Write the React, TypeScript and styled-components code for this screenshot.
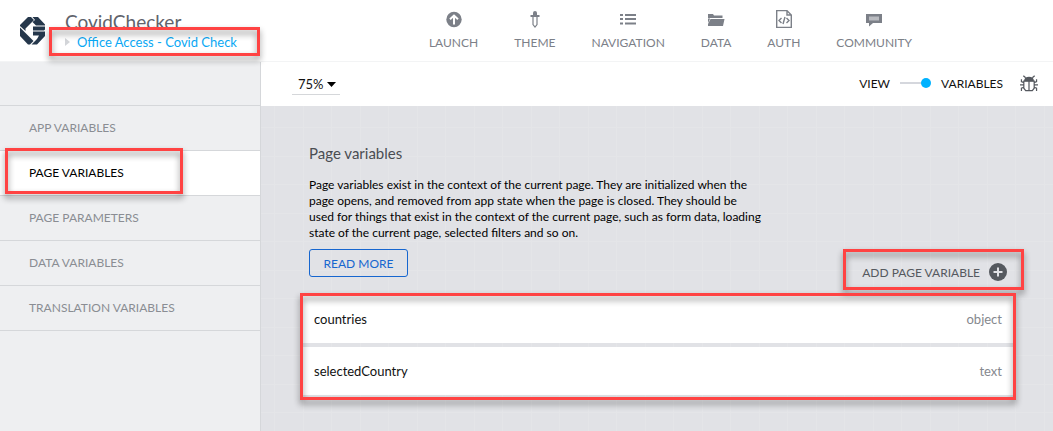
import React from "react";
import styled, { createGlobalStyle, css } from "styled-components";

const Global = createGlobalStyle`
  * { box-sizing: border-box; }
  body { margin: 0; background: #fff; font-family: Lato, "Liberation Sans", sans-serif; font-size: 12px; color: #111; }
  button, select, input { font: inherit; color: inherit; margin: 0; }
  a { color: inherit; text-decoration: none; }
  ul { margin: 0; padding: 0; list-style: none; }
  svg { display: block; }
`;

const Page = styled.div`
  min-height: 100vh;
  display: flex;
  flex-direction: column;
`;

const Header = styled.header`
  display: flex;
  height: 62px;
  border-bottom: 1px solid #f3f4f5;
  background: #fff;
`;

const Brand = styled.div`
  width: 288px;
  flex: none;
  display: flex;
  gap: 19px;
  padding: 12px 0 0 20px;
`;

const LogoLink = styled.a`
  padding-top: 5px;
`;

const AppTitle = styled.h1`
  margin: 0;
  font-size: 19px;
  line-height: 20px;
  font-weight: 400;
  color: #5f636c;
`;

const Crumb = styled.a`
  position: relative;
  display: flex;
  align-items: center;
  gap: 7px;
  line-height: 20px;
  font-size: 13px;
  color: #09a8f4;
`;

const CrumbBlock = styled.div`
  display: flex;
  flex-direction: column;
  align-items: flex-start;
`;

const TopNav = styled.nav`
  flex: 1;
  display: flex;
  justify-content: center;
  gap: 36px;
`;

const TopLink = styled.a`
  display: flex;
  flex-direction: column;
  align-items: center;
  gap: 6px;
  padding-top: 9px;
  line-height: 16px;
  color: #7c8088;

  svg { height: 20px; }
`;

const Body = styled.div`
  flex: 1;
  display: flex;
`;

const Sidebar = styled.nav`
  width: 261px;
  flex: none;
  padding-top: 43px;
  background: #eeeff1;
  border-right: 1px solid #d5d7da;
`;

const SideItem = styled.li`
  border-top: 1px solid #d5d7da;
`;

const SideLink = styled.a<{ $active?: boolean }>`
  position: relative;
  display: block;
  height: 44px;
  padding-left: 29px;
  line-height: 43px;
  color: #8a8d93;
  ${(p) => p.$active && css`background: #fff; color: #000;`}
`;

const Main = styled.main`
  flex: 1;
  min-width: 0;
  display: flex;
  flex-direction: column;
`;

const Toolbar = styled.div`
  height: 44px;
  display: flex;
  align-items: center;
  justify-content: space-between;
  padding: 0 15px 0 31px;
  background: #fff;
`;

const ZoomBox = styled.div`
  position: relative;
  width: 48px;

  svg { position: absolute; right: 4px; top: 9px; pointer-events: none; }
`;

const ZoomSelect = styled.select`
  appearance: none;
  display: block;
  width: 100%;
  height: 22px;
  padding: 0 0 0 6px;
  border: 0;
  border-bottom: 1px solid #d5d7da;
  border-radius: 0;
  background: transparent;
  font-size: 13px;
`;

const ModeSwitch = styled.div`
  display: flex;
  align-items: center;
  margin-top: -2px;

  label { display: flex; align-items: center; gap: 10px; }
`;

const Switch = styled.input`
  appearance: none;
  position: relative;
  width: 31px;
  height: 10px;

  &::before { content: ""; position: absolute; left: 0; right: 5px; top: 4px; height: 2px; background: #d5d7dd; }
  &::after { content: ""; position: absolute; right: 0; top: 0; width: 10px; height: 10px; border-radius: 50%; background: #00b2ff; }
`;

const IconButton = styled.button`
  margin-left: 17px;
  padding: 0;
  border: 0;
  background: none;
`;

const Canvas = styled.section`
  flex: 1;
  padding: 38px 40px 31px 42px;
  background-color: #e1e2e6;
  background-image:
    linear-gradient(90deg, #e4e5e8 1px, transparent 1px),
    linear-gradient(90deg, #e4e5e8 1px, transparent 1px),
    linear-gradient(#e4e5e8 1px, transparent 1px),
    linear-gradient(#e4e5e8 1px, transparent 1px);
  background-size: 57px 57px;
  background-position: 13px 0, 42px 0, 0 21px, 0 50px;
`;

const Intro = styled.div`
  max-width: 458px;
  padding-left: 6px;

  h2 { margin: 0; font-size: 15px; line-height: 18px; font-weight: 400; color: #4a4d52; }
  p { margin: 15px 0 8px; line-height: 16px; color: #000; }
`;

const ReadMore = styled.button`
  display: block;
  width: 99px;
  height: 28px;
  padding: 0;
  border: 1px solid #1666cf;
  border-radius: 3px;
  background: transparent;
  color: #1666cf;
`;

const Actions = styled.div`
  display: flex;
  justify-content: flex-end;
  margin-top: -17px;
  padding-right: 6px;
`;

const AddButton = styled.button`
  position: relative;
  display: flex;
  align-items: center;
  gap: 9px;
  height: 24px;
  padding: 0;
  border: 0;
  background: none;
  color: #55595f;
`;

const VariableList = styled.ul`
  position: relative;
  display: flex;
  flex-direction: column;
  gap: 4px;
  margin-top: 11px;
`;

const VariableRow = styled.li`
  display: flex;
  align-items: center;
  justify-content: space-between;
  height: 48px;
  padding: 0 11px;
  background: #fff;
  font-size: 13px;

  span:last-child { color: #85888e; }
`;

const Highlight = styled.span<{ $inset: string }>`
  position: absolute;
  inset: ${(p) => p.$inset};
  z-index: 1;
  border: 3px solid #ff4343;
  filter: drop-shadow(0 4px 3px rgba(0, 0, 0, 0.45));
  pointer-events: none;
`;

const Logo = () => (
  <svg width="26" height="28" viewBox="0 0 26 28" fill="#25374b">
    <path d="M8 0H11L14 3 5.500 11.500V14L0 9V8Z" />
    <path d="M0 10.500 13.500 24 10 27.500H8L0 19Z" />
    <path d="M12.500 0H18L25 7.500V8.500H16L12.500 5 15 3Z" />
    <path d="M13 9.500H25V12.500L24 13.500H13ZM13 14.500H25V19L17 27.500H11.500L17 22 19 18.500H13Z" />
  </svg>
);

const icons: Record<string, React.ReactNode> = {
  LAUNCH: (
    <svg width="16" height="20" viewBox="0 0 16 20">
      <circle cx="8" cy="10.500" r="7.700" fill="#7c8088" />
      <path d="M8 15.500V7.500M4 10.200 8 6.500 12 10.200" fill="none" stroke="#fff" strokeWidth="2" />
    </svg>
  ),
  THEME: (
    <svg width="10" height="20" viewBox="0 0 10 20" fill="#7c8088">
      <path d="M3 6V4a2 2 0 0 1 4 0v2h2.500v2h-9V6Z" />
      <path d="M3 8V15.500L5 18 7 15.500V8" fill="none" stroke="#7c8088" strokeWidth="1.200" />
    </svg>
  ),
  NAVIGATION: (
    <svg width="16" height="20" viewBox="0 0 16 20" fill="#7c8088">
      <path d="M0 5h3v2H0zM5 5h11v2H5zM0 9h3v2H0zM5 9h11v2H5zM0 13.500h3v2H0zM5 13.500h11v2H5z" />
    </svg>
  ),
  DATA: (
    <svg width="18" height="20" viewBox="0 0 18 20" fill="#7c8088">
      <path d="M1 5h5l1 1.500h8.500V9H1Z" />
      <path d="M1 9.500H3V10L1 14Z" />
      <path d="M3.500 10H17.500L16 17H1V15Z" />
    </svg>
  ),
  AUTH: (
    <svg width="16" height="20" viewBox="0 0 16 20" fill="none" stroke="#7c8088" strokeWidth="1.400">
      <path d="M.7 1.600H11L15.300 6V18.400H.7ZM11 1.600V6H15.300" />
      <path d="M5.500 9 3 11.500 5.500 14M10.500 9 13 11.500 10.500 14M9 8 7 15" />
    </svg>
  ),
  COMMUNITY: (
    <svg width="16" height="20" viewBox="0 0 16 20">
      <path d="M0 5H16V14H7L3 17.500V14H0Z" fill="#7c8088" />
      <path d="M3 7.500H13V11.500H3Z" fill="#b9bbc0" />
    </svg>
  ),
};

const Bug = () => (
  <svg width="18" height="17" viewBox="0 0 19 18" fill="none" stroke="#55595f" strokeWidth="1.300">
    <path d="M5 6a4.500 3.500 0 0 1 9 0Z" fill="#55595f" />
    <path d="M4 6.500H15V14L13 16.500H6L4 14ZM9.500 7V16M6 3 3.500.8M13 3 15.500.8M4 8 1.500 7V4.500M15 8 17.500 7V4.500M4 10.500H0M15 10.500H19M4 13 1.500 14V17M15 13 17.500 14V17" />
  </svg>
);

const sections = ["APP VARIABLES", "PAGE VARIABLES", "PAGE PARAMETERS", "DATA VARIABLES", "TRANSLATION VARIABLES"];
const variables = [
  { name: "countries", type: "object" },
  { name: "selectedCountry", type: "text" },
];

export default function App() {
  return (
    <Page>
      <Global />
      <Header>
        <Brand>
          <LogoLink href="#" aria-label="Home"><Logo /></LogoLink>
          <CrumbBlock>
            <AppTitle>CovidChecker</AppTitle>
            <Crumb href="#">
              <svg width="5" height="8" viewBox="0 0 5 8"><path d="M0 0 5 4 0 8Z" fill="#d3d5d9" /></svg>
              Office Access - Covid Check
              <Highlight $inset="-5px -23px -4px -16px" />
            </Crumb>
          </CrumbBlock>
        </Brand>
        <TopNav aria-label="Main">
          {Object.keys(icons).map((name) => (
            <TopLink href="#" key={name}>{icons[name]}{name}</TopLink>
          ))}
        </TopNav>
      </Header>
      <Body>
        <Sidebar aria-label="Variables">
          <ul>
            {sections.map((s) => (
              <SideItem key={s}>
                <SideLink href="#" $active={s === "PAGE VARIABLES"}>
                  {s}
                  {s === "PAGE VARIABLES" && <Highlight $inset="-3px 77px 1px 5px" />}
                </SideLink>
              </SideItem>
            ))}
            <SideItem />
          </ul>
        </Sidebar>
        <Main>
          <Toolbar>
            <ZoomBox>
              <ZoomSelect aria-label="Zoom" defaultValue="75%">
                <option>50%</option>
                <option>75%</option>
                <option>100%</option>
              </ZoomSelect>
              <svg width="9" height="5" viewBox="0 0 9 5"><path d="M0 0H9L4.500 5Z" /></svg>
            </ZoomBox>
            <ModeSwitch>
              <label>VIEW<Switch type="checkbox" role="switch" defaultChecked />VARIABLES</label>
              <IconButton aria-label="Debug"><Bug /></IconButton>
            </ModeSwitch>
          </Toolbar>
          <Canvas>
            <Intro>
              <h2>Page variables</h2>
              <p>
                Page variables exist in the context of the current page. They are initialized when the
                page opens, and removed from app state when the page is closed. They should be
                used for things that exist in the context of the current page, such as form data, loading
                state of the current page, selected filters and so on.
              </p>
              <ReadMore>READ MORE</ReadMore>
            </Intro>
            <Actions>
              <AddButton>
                ADD PAGE VARIABLE
                <svg width="18" height="18" viewBox="0 0 18 18">
                  <circle cx="9" cy="9" r="9" fill="#55595f" />
                  <path d="M9 4.500V13.500M4.500 9H13.500" stroke="#e1e2e6" strokeWidth="2" />
                </svg>
                <Highlight $inset="-11px -17px -6px -19px" />
              </AddButton>
            </Actions>
            <VariableList>
              {variables.map((v) => (
                <VariableRow key={v.name}><span>{v.name}</span><span>{v.type}</span></VariableRow>
              ))}
              <Highlight as="li" $inset="-2px -3px -5px -3px" />
            </VariableList>
          </Canvas>
        </Main>
      </Body>
    </Page>
  );
}
